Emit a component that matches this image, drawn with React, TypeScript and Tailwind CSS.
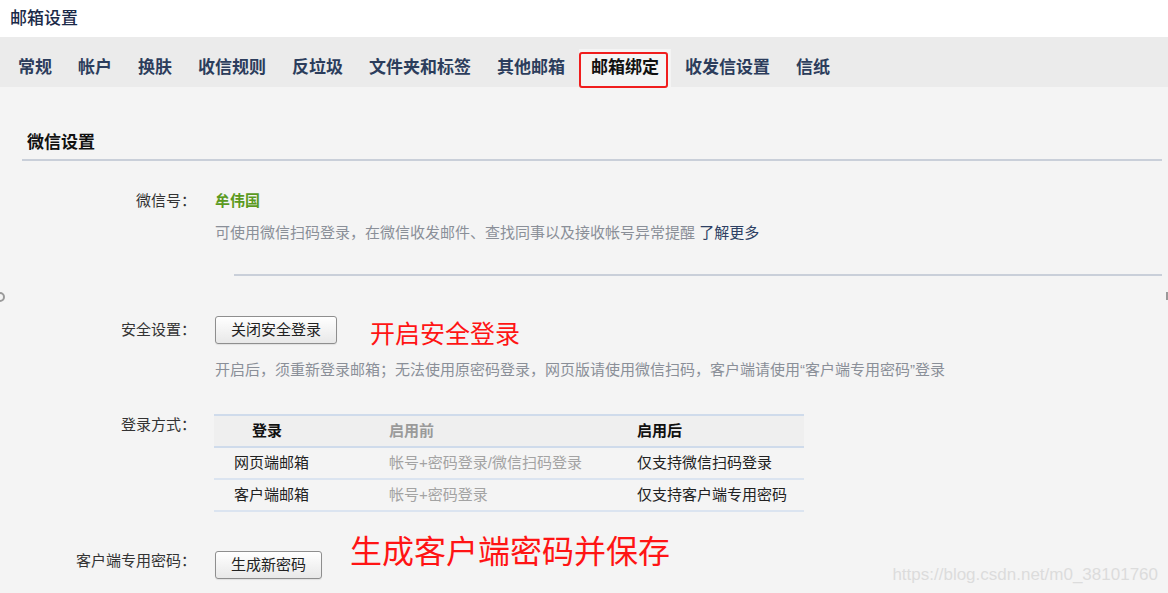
const tabs = [
  "常规",
  "帐户",
  "换肤",
  "收信规则",
  "反垃圾",
  "文件夹和标签",
  "其他邮箱",
  "邮箱绑定",
  "收发信设置",
  "信纸",
];

const loginRows = [
  { name: "网页端邮箱", before: "帐号+密码登录/微信扫码登录", after: "仅支持微信扫码登录" },
  { name: "客户端邮箱", before: "帐号+密码登录", after: "仅支持客户端专用密码" },
];

function Btn({ children }: { children: React.ReactNode }) {
  return (
    <button
      type="button"
      className="h-[28px] shrink-0 rounded-[3px] border border-[#8e8e8e] bg-gradient-to-b from-white to-[#e8e8e8] px-[15px] text-[15px] leading-[26px] text-[#222] shadow-[0_1px_1px_rgba(0,0,0,0.08)]"
    >
      {children}
    </button>
  );
}

export default function App() {
  const active = "邮箱绑定";

  return (
    <div className="relative h-[593px] w-full overflow-hidden bg-[#f4f4f4] font-['Liberation_Sans','Noto_Sans_CJK_SC',sans-serif] text-[#333]">
      {/* title */}
      <div className="flex h-[37px] items-center bg-white pl-[10px] text-[17px] font-medium text-[#1b2a48]">
        邮箱设置
      </div>

      {/* tabs */}
      <div className="flex h-[50px] items-end gap-[2px] bg-[#ebebeb] pl-[6px]">
        {tabs.map((tab) => (
          <div
            key={tab}
            className={`relative flex h-[38px] items-center px-[12px] text-[17px] font-bold ${
              tab === active ? "bg-[#f4f4f4] text-[#111]" : "text-[#2c3d5c]"
            }`}
          >
            {tab}
            {tab === active && (
              <span className="pointer-events-none absolute bottom-[-1px] left-0 right-[3px] top-[3px] rounded-[3px] border-2 border-[#f01d1d]" />
            )}
          </div>
        ))}
      </div>

      <div className="pt-[44px]">
        <div className="ml-[22px] mr-[6px] border-b-2 border-[#c9cfd9] pb-[4px] pl-[5px] text-[17px] font-bold leading-[24px] text-[#111]">
          微信设置
        </div>

        {/* wechat id */}
        <div className="mt-[29px] flex text-[15px] leading-[22px]">
          <div className="w-[196px] shrink-0 text-right">微信号：</div>
          <div className="ml-[19px] font-bold text-[#5b9a1e]">牟伟国</div>
        </div>
        <div className="mt-[10px] pl-[215px] text-[15px] leading-[22px] text-[#8a8f98]">
          可使用微信扫码登录，在微信收发邮件、查找同事以及接收帐号异常提醒{" "}
          <span className="text-[#2d3f63]">了解更多</span>
        </div>

        <div className="ml-[234px] mr-[6px] mt-[30px] h-[2px] bg-[#c9cfd9]" />

        {/* security */}
        <div className="mt-[40px] flex items-start text-[15px]">
          <div className="w-[196px] shrink-0 text-right leading-[28px]">安全设置：</div>
          <div className="ml-[19px]">
            <Btn>关闭安全登录</Btn>
          </div>
          <span className="ml-[33px] mt-[3px] text-[25px] leading-[30px] text-[#ff1414]">
            开启安全登录
          </span>
        </div>
        <div className="mt-[10px] pl-[215px] text-[15px] leading-[22px] text-[#8a8f98]">
          开启后，须重新登录邮箱；无法使用原密码登录，网页版请使用微信扫码，客户端请使用“客户端专用密码”登录
        </div>

        {/* login table */}
        <div className="mt-[33px] flex text-[15px] leading-[22px]">
          <div className="w-[196px] shrink-0 text-right">登录方式：</div>
          <div className="ml-[18px] w-[590px] border-t-2 border-[#cfdbeb]">
            <div className="flex h-[32px] items-center border-b-2 border-[#cfdbeb] bg-[#efefef] font-bold">
              <div className="w-[175px] pl-[38px] text-[#111]">登录</div>
              <div className="w-[248px] text-[#9a9a9a]">启用前</div>
              <div className="text-[#111]">启用后</div>
            </div>
            {loginRows.map((r) => (
              <div key={r.name} className="flex h-[32px] items-center border-b-2 border-[#dbe4f0]">
                <div className="w-[175px] pl-[20px] text-[#222]">{r.name}</div>
                <div className="w-[248px] text-[#a3a3a3]">{r.before}</div>
                <div className="text-[#222]">{r.after}</div>
              </div>
            ))}
          </div>
        </div>

        {/* client password */}
        <div className="mt-[20px] flex items-start text-[15px] leading-[22px]">
          <div className="w-[196px] shrink-0 pt-[18px] text-right">客户端专用密码：</div>
          <div className="ml-[19px] mt-[19px]">
            <Btn>生成新密码</Btn>
          </div>
          <span className="ml-[28px] text-[32px] leading-[40px] text-[#ff1414]">
            生成客户端密码并保存
          </span>
        </div>
      </div>

      {/* edge marks */}
      <span className="absolute left-[-5px] top-[292px] h-[10px] w-[10px] rounded-full border-2 border-[#9a9a9a]" />
      <span className="absolute right-0 top-[292px] h-[8px] w-[2px] bg-[#9a9a9a]" />

      {/* watermark */}
      <div className="absolute bottom-[6px] right-[10px] font-['Liberation_Sans',sans-serif] text-[17px] text-[#dcdcdc]">
        https://blog.csdn.net/m0_38101760
      </div>
    </div>
  );
}
